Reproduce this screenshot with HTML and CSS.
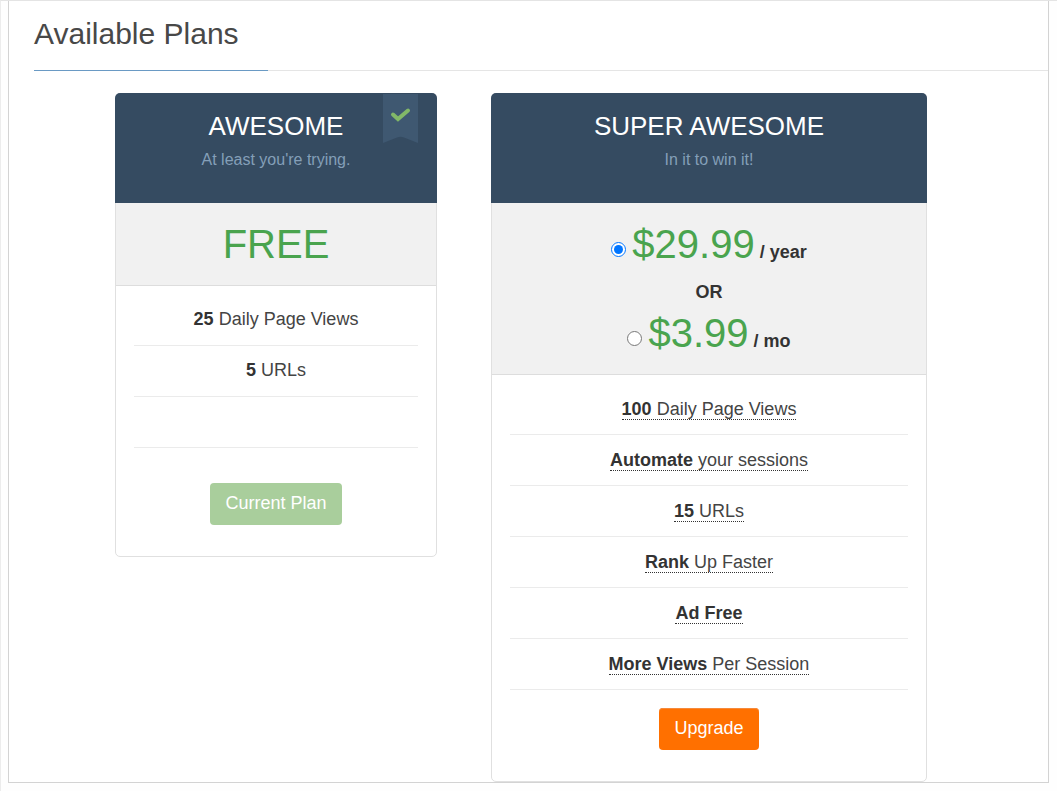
FILE: index.html
```html
<!DOCTYPE html>
<html lang="en">
<head>
<meta charset="utf-8">
<title>Available Plans</title>
<link rel="stylesheet" href="styles.css">
</head>
<body>
<main class="panel">
  <header class="panel-head">
    <h1 class="panel-title">Available Plans</h1>
  </header>
  <div class="plans">
    <section class="plan">
      <header class="plan-head">
        <h2 class="plan-name">AWESOME</h2>
        <p class="plan-tag">At least you're trying.</p>
        <svg class="ribbon" viewBox="0 0 35 49" aria-hidden="true">
          <path class="ribbon-shape" d="M0 0H35V49L21 43.500Q17.500 42 14 43.500L0 49Z"/>
          <path class="ribbon-check" d="M10 20.500L15 25L25 16.500"/>
        </svg>
      </header>
      <div class="plan-price">
        <div class="price-row"><span class="amount">FREE</span></div>
      </div>
      <ul class="features">
        <li class="feature"><span><b>25</b> Daily Page Views</span></li>
        <li class="feature"><span><b>5</b> URLs</span></li>
        <li class="feature"></li>
      </ul>
      <div class="plan-action plan-action-current">
        <button class="btn btn-current" type="button" disabled>Current Plan</button>
      </div>
    </section>
    <section class="plan">
      <header class="plan-head">
        <h2 class="plan-name">SUPER AWESOME</h2>
        <p class="plan-tag">In it to win it!</p>
      </header>
      <div class="plan-price">
        <div class="price-row">
          <input class="price-radio" type="radio" name="billing" id="bill-year" checked>
          <label class="price-label" for="bill-year"><span class="amount">$29.99</span><b>/ year</b></label>
        </div>
        <div class="price-or">OR</div>
        <div class="price-row">
          <input class="price-radio" type="radio" name="billing" id="bill-month">
          <label class="price-label" for="bill-month"><span class="amount">$3.99</span><b>/ mo</b></label>
        </div>
      </div>
      <ul class="features">
        <li class="feature"><span class="hint"><b>100</b> Daily Page Views</span></li>
        <li class="feature"><span class="hint"><b>Automate</b> your sessions</span></li>
        <li class="feature"><span class="hint"><b>15</b> URLs</span></li>
        <li class="feature"><span class="hint"><b>Rank</b> Up Faster</span></li>
        <li class="feature"><span class="hint"><b>Ad Free</b></span></li>
        <li class="feature"><span class="hint"><b>More Views</b> Per Session</span></li>
      </ul>
      <div class="plan-action">
        <button class="btn btn-upgrade" type="button">Upgrade</button>
      </div>
    </section>
  </div>
</main>
</body>
</html>
```
FILE: styles.css
```css
* { box-sizing: border-box; }

body {
  margin: 0;
  padding: 0 8px 8px 7px;
  min-height: 100vh;
  border-top: 1px solid #e4e4e4;
  border-left: 1px solid #ececec;
  background: #fefefe;
  color: #333;
  font: 18px/26px "Liberation Sans", Arial, sans-serif;
}

.panel {
  border: solid #d3d3d3;
  border-width: 0 1px 1px;
  padding-left: 25px;
  background: #fff;
}

.panel-head {
  height: 70px;
  padding-top: 13px;
  border-bottom: 1px solid #e5e5e5;
  display: flex;
}

.panel-title {
  margin: 0 0 -1px;
  width: 234px;
  border-bottom: 1px solid #6a9ac4;
  color: #484848;
  font-size: 30px;
  line-height: 40px;
  font-weight: 400;
  white-space: nowrap;
}

.plans {
  display: grid;
  grid-template-columns: 322fr 436fr;
  gap: 54px;
  align-items: start;
  padding: 22px 121px 0 81px;
}

.plan {
  border: 1px solid #e0e0e0;
  border-radius: 5px;
  text-align: center;
  background: #fff;
}

.plan-head {
  position: relative;
  height: 110px;
  margin: -1px -1px 0;
  padding-top: 16px;
  border-radius: 5px 5px 0 0;
  background: #354b61;
}

.plan-name {
  margin: 0;
  color: #fff;
  font-size: 26px;
  line-height: 34px;
  font-weight: 400;
}

.plan-tag {
  margin: 5px 0 0;
  color: #849fb8;
  font-size: 16px;
  line-height: 24px;
}

.ribbon {
  position: absolute;
  top: 1px;
  right: 19px;
  width: 35px;
  height: 49px;
}

.ribbon-shape { fill: #3f5871; }

.ribbon-check {
  fill: none;
  stroke: #82b868;
  stroke-width: 4;
  stroke-linecap: round;
}

.plan-price {
  padding: 18px 16px;
  border-bottom: 1px solid #ddd;
  background: #f1f1f1;
}

.price-row {
  display: flex;
  align-items: center;
  justify-content: center;
  gap: 6px;
  height: 46px;
}

.price-radio {
  width: 15px;
  height: 15px;
  margin: 10px 0 0;
  accent-color: #0075ff;
}

.price-label {
  display: flex;
  align-items: baseline;
  gap: 5px;
}

.amount {
  color: #4aa44e;
  font-size: 40px;
  line-height: 44px;
}

.price-or {
  padding-top: 7px;
  line-height: 36px;
  font-weight: 700;
}

.features {
  margin: 0;
  padding: 9px 18px 0;
  list-style: none;
}

.feature {
  height: 51px;
  padding-top: 11px;
  border-bottom: 1px solid #ebebeb;
  color: #444;
}

.feature b { color: #333; }

.hint {
  display: inline-block;
  line-height: 20px;
  margin-top: 4px;
  border-bottom: 1px dotted #333;
}

.plan-action { padding: 18px 16px 31px; }

.plan-action-current { padding-top: 35px; }

.btn {
  display: block;
  margin: 0 auto;
  height: 42px;
  padding: 0 15px 2px;
  border: 0;
  border-radius: 4px;
  color: #fff;
  font: inherit;
}

.btn-current { background: #a9ce9c; }

.btn-upgrade {
  background: #ff7000;
  box-shadow: inset 0 1px #f58a3c;
}
```
